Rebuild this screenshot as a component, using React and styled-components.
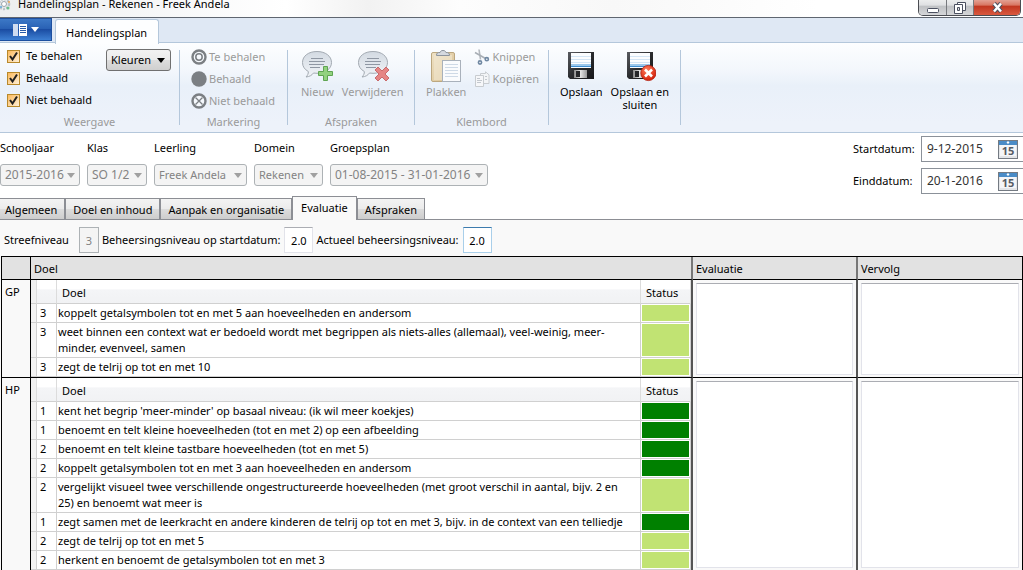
import styled, { createGlobalStyle } from 'styled-components'
import { useState } from 'react'


const arrow = (color) =>
  `url("data:image/svg+xml,%3Csvg xmlns='http://www.w3.org/2000/svg' width='8' height='5'%3E%3Cpath d='M0 0h8L4 5z' fill='%23${color}'/%3E%3C/svg%3E")`

const tick =
  `url("data:image/svg+xml,%3Csvg xmlns='http://www.w3.org/2000/svg' width='11' height='11'%3E%3Cpath d='M2 5l2.500 3.500L9 1.500' fill='none' stroke='%23202020' stroke-width='2'/%3E%3C/svg%3E")`

const GlobalStyle = createGlobalStyle`
  * {
    box-sizing: border-box;
  }
  body {
    margin: 0;
    overflow: hidden;
    background-color: #fff;
  }
  body, button, input, select, textarea {
    font-family: 'Noto Sans', 'Open Sans', sans-serif;
    font-size: 11px;
    line-height: 16px;
    color: #000;
  }
  button {
    margin: 0;
    padding: 0;
    border: 0;
    background: none;
  }
  svg {
    display: block;
    flex: none;
  }
`

const TitleBar = styled.header`
  display: flex;
  align-items: flex-end;
  justify-content: space-between;
  height: 18px;
  border-bottom: 1px solid #5f6670;
  background: linear-gradient(to right, #eceeef, #fff 28%, #f2f2f2 36%, #fdfdfd 45%, #f8f8f8 60%, #fff 80%);
`
const AppTitle = styled.div`
  display: flex;
  align-items: flex-end;
  gap: 7px;
  padding-bottom: 5px;
`
const TitleText = styled.h1`
  margin: 0;
  font-size: 11px;
  font-weight: 400;
  line-height: 16px;
`
const WindowButtons = styled.div`
  display: flex;
  margin-right: 2px;
  height: 16px;
  align-self: flex-start;
  border: 1px solid #4a4c52;
  border-top: 0;
  border-radius: 0 0 5px 5px;
  overflow: hidden;
`
const WindowButton = styled.button`
  display: flex;
  align-items: center;
  justify-content: center;
  width: ${({ $wide }) => ($wide ? '47px' : '27px')};
  background: ${({ $close }) => $close
    ? 'linear-gradient(#e3a193, #d87561 35%, #c03620 40%, #d9593f)'
    : 'linear-gradient(#eceded, #dfe0e2 35%, #bfc1c4 40%, #d5d6d8)'};

  & + & {
    border-left: 1px solid #77797d;
  }
`

const TabStrip = styled.nav`
  display: flex;
  height: 25px;
  gap: 3px;
  background-color: #dfe8f4;
  border-bottom: 1px solid #b4c7db;
`
const AppMenu = styled.button`
  display: flex;
  align-items: center;
  justify-content: center;
  gap: 4px;
  width: 52px;
  height: 23px;
  border: 1px solid #1d4f9f;
  border-left: 0;
  background: linear-gradient(#3c78c6, #2a62b5 45%, #1b4da3 50%, #3d7fd2);
`
const RibbonTab = styled.button`
  align-self: flex-start;
  height: 25px;
  margin-top: 1px;
  padding: 2px 11px 0 10px;
  border: 1px solid #b4c7db;
  border-bottom: 0;
  border-radius: 3px 3px 0 0;
  background-color: #fdfeff;
`
const Ribbon = styled.section`
  display: flex;
  height: 90px;
  padding: 7px 0;
  border-bottom: 1px solid #b4c7db;
  background: linear-gradient(#fdfeff, #f3f7fc 30%, #e9f0f9 48%, #edf2fa 90%);
`
const Group = styled.div`
  display: flex;
  flex-direction: column;
  justify-content: space-between;
  width: ${({ $width }) => $width};
  border-right: 1px solid #b4c7db;
`
const GroupBody = styled.div`
  display: flex;
  align-items: flex-start;
  justify-content: ${({ $spread }) => ($spread ? 'space-between' : 'flex-start')};
  gap: 8px;
  padding: 0 8px 0 ${({ $left }) => $left || '8px'};
`
const GroupLabel = styled.div`
  margin-bottom: -5px;
  color: #9a9a9a;
  text-align: center;
`
const Stack = styled.div`
  display: flex;
  flex-direction: column;
  gap: 6px;
  margin-top: ${({ $checks }) => ($checks ? '-2px' : '-1px')};
`
const CheckLabel = styled.label`
  display: flex;
  align-items: center;
  gap: 6px;
  height: 16px;
`
const Check = styled.input`
  appearance: none;
  width: 13px;
  height: 13px;
  margin: 0;
  border: 1px solid #b8892b;
  background: #fde0b0;

  &:checked {
    background: ${tick} center no-repeat, linear-gradient(135deg, #fbb95c, #fff0d8);
  }
`
const ColorButton = styled.button`
  height: 22px;
  width: 65px;
  margin-top: -1px;
  padding: 0 4px;
  border: 1px solid #707070;
  border-radius: 3px;
  background: ${arrow('000000')} right 5px center no-repeat, linear-gradient(#f2f2f2, #ebebeb 50%, #dddddd 50%, #cfcfcf);
  text-align: left;
`
const SmallButton = styled.button`
  display: flex;
  align-items: center;
  gap: 2px;
  height: 16px;
  color: #9a9a9a;
  white-space: nowrap;
`
const BigButton = styled.button`
  display: flex;
  flex-direction: column;
  align-items: center;
  gap: 3px;
  line-height: 13px;
  white-space: pre;

  &:disabled {
    color: #9a9a9a;
  }
`

const FormBar = styled.section`
  display: flex;
  justify-content: space-between;
  padding-top: 3px;
  height: 64px;
`
const Filters = styled.div`
  display: flex;
  gap: 7px;
  padding-top: 4px;
`
const Filter = styled.label`
  display: flex;
  flex-direction: column;
  gap: 8px;
`
const Select = styled.select`
  appearance: none;
  width: ${({ $width }) => $width};
  height: 22px;
  padding: 0 4px;
  border: 1px solid #adb2b5;
  border-radius: 3px;
  background: #f4f4f4 ${arrow('a0a0a0')} right 4px center no-repeat;
  font-size: ${({ $text }) => ($text ? '11px' : '12px')};

  &:disabled {
    color: #838383;
    opacity: 1;
  }
`
const Dates = styled.div`
  display: flex;
  flex-direction: column;
  gap: 6px;
`
const DateRow = styled.label`
  display: grid;
  grid-template-columns: 68px 102px;
  align-items: center;
`
const DateBox = styled.span`
  display: flex;
  align-items: center;
  justify-content: space-between;
  height: 26px;
  padding: 0 5px;
  border: 1px solid #8b9199;
  border-right: 0;
  background-color: #fff;
`
const DateInput = styled.input`
  width: 66px;
  padding: 0;
  border: 0;
  outline: 0;
  color: #333;
  font-size: 12px;
`

const Tabs = styled.nav`
  display: flex;
  align-items: flex-end;
  height: 23px;
  border-bottom: 1px solid #8c8e94;
`
const Tab = styled.button`
  height: ${({ $active }) => ($active ? '24px' : '21px')};
  padding: ${({ $active }) => ($active ? '0 8px 2px' : '1px 7px 0')};
  margin-bottom: ${({ $active }) => ($active ? '-1px' : '0')};
  border: 1px solid #8c8e94;
  border-bottom: 0;
  background: ${({ $active }) => ($active ? '#f9f9f9' : 'linear-gradient(#f3f3f3, #ebebeb 50%, #dddddd 50%, #cdcdcd)')};
  white-space: nowrap;

  &:first-child {
    padding-left: 5px;
    border-left: 0;
  }
`
const Panel = styled.main`
  padding: 7px 0 0 1px;
  background-color: #f9f9f9;
`
const Levels = styled.div`
  display: flex;
  align-items: center;
  gap: 3px;
  padding: 0 3px;
  margin-bottom: 3px;
`
const Level = styled.label`
  display: flex;
  align-items: center;
  gap: ${({ $gap }) => $gap || '4px'};
`
const LevelInput = styled.input`
  width: ${({ $width }) => $width || '29px'};
  height: 26px;
  padding: 0;
  border: 1px solid ${({ $focus }) => ($focus ? '#a9cfea' : '#e2e3ea')};
  border-top-color: ${({ $focus }) => ($focus ? '#3d7bad' : '#abadb3')};
  outline: 0;
  text-align: center;

  &:disabled {
    border-color: #adb2b5;
    background-color: #f4f4f4;
    color: #838383;
  }
`

const Grid = styled.table`
  width: 100%;
  table-layout: fixed;
  border-collapse: separate;
  border-spacing: 0;
  border: 1px solid #000;
`
const HeadCell = styled.th`
  height: 23px;
  padding: 1px 3px 0;
  border-bottom: 1px solid #000;
  border-right: ${({ $line }) => $line || '0'};
  background-color: #e2e2e2;
  font-weight: 400;
  text-align: left;
`
const PlanCell = styled.th`
  padding: 4px 3px;
  border-right: 1px solid #000;
  border-bottom: 1px solid #000;
  font-weight: 400;
  text-align: left;
  vertical-align: top;
`
const Cell = styled.td`
  height: 1px;
  padding: ${({ $pad }) => $pad || '0'};
  border-bottom: 1px solid #000;
  border-right: ${({ $line }) => $line || '0'};
  vertical-align: top;
`
const Notes = styled.textarea`
  display: block;
  width: 100%;
  height: 100%;
  border: 1px solid #e2e3ea;
  border-top-color: #abadb3;
  outline: 0;
  resize: none;
`
const Goals = styled.table`
  width: 100%;
  table-layout: fixed;
  border-collapse: separate;
  border-spacing: 0;
  background-color: #fff;
`
const GoalHead = styled.th`
  height: 24px;
  padding: 2px 5px 0;
  border-right: 1px solid #dcdcdc;
  border-bottom: 1px solid #d0d0d0;
  background: ${({ $bar }) => ($bar ? '#f0f0f0' : 'linear-gradient(#fff 40%, #f4f5f7 42%, #f1f2f4)')};
  font-weight: 400;
  text-align: left;
`
const GoalCell = styled.td`
  padding: ${({ $number }) => ($number ? '1px 3px' : '1px')};
  border-right: 1px solid #d0d0d0;
  border-bottom: 1px solid #d0d0d0;
  vertical-align: top;
`
const BarCell = styled(GoalCell)`
  background-color: #f3f3f3;
`
const LineText = styled.div`
  white-space: pre-line;
`
const StatusCell = styled(GoalCell)`
  background: ${({ $done }) => ($done ? '#008000' : '#c1e373')} content-box;
`

const goals = [
  {
    plan: 'GP',
    rows: [
      [3, 'koppelt getalsymbolen tot en met 5 aan hoeveelheden en andersom', false],
      [3, 'weet binnen een context wat er bedoeld wordt met begrippen als niets-alles (allemaal), veel-weinig, meer-\nminder, evenveel, samen', false],
      [3, 'zegt de telrij op tot en met 10', false],
    ],
  },
  {
    plan: 'HP',
    rows: [
      [1, "kent het begrip 'meer-minder' op basaal niveau: (ik wil meer koekjes)", true],
      [1, 'benoemt en telt kleine hoeveelheden (tot en met 2) op een afbeelding', true],
      [2, 'benoemt en telt kleine tastbare hoeveelheden (tot en met 5)', true],
      [2, 'koppelt getalsymbolen tot en met 3 aan hoeveelheden en andersom', true],
      [2, 'vergelijkt visueel twee verschillende ongestructureerde hoeveelheden (met groot verschil in aantal, bijv. 2 en\n25) en benoemt wat meer is', false],
      [1, 'zegt samen met de leerkracht en andere kinderen de telrij op tot en met 3, bijv. in de context van een telliedje', true],
      [2, 'zegt de telrij op tot en met 5', false],
      [2, 'herkent en benoemt de getalsymbolen tot en met 3', false],
    ],
  },
]

const filters = [
  ['Schooljaar', '2015-2016', '80px'],
  ['Klas', 'SO 1/2', '60px'],
  ['Leerling', 'Freek Andela', '93px', true],
  ['Domein', 'Rekenen', '69px', true],
  ['Groepsplan', '01-08-2015 - 31-01-2016', '158px'],
]

const tabs = ['Algemeen', 'Doel en inhoud', 'Aanpak en organisatie', 'Evaluatie', 'Afspraken']

function GearIcon() {
  return (
    <svg width="11" height="14" viewBox="0 0 11 14">
      <circle cx="4" cy="6" r="5" fill="none" stroke="#b9c0c6" strokeWidth="2.500" strokeDasharray="2 1.300" />
      <circle cx="4" cy="6" r="2.500" fill="#fff" stroke="#9aa3ab" />
      <circle cx="8" cy="10" r="1.500" fill="#6cc08b" />
      <circle cx="9" cy="4" r="1" fill="#e9a24b" />
      <circle cx="1" cy="9" r="1" fill="#62a8dc" />
    </svg>
  )
}

function MarkIcon({ type }) {
  return (
    <svg width="16" height="16" viewBox="0 0 16 16">
      {type === 'full' && <circle cx="8" cy="8" r="7.700" fill="#7b7f83" />}
      {type !== 'full' && <circle cx="8" cy="8" r="6.500" fill="#f5f8fc" stroke="#7b7f83" strokeWidth="2.400" />}
      {type === 'ring' && <circle cx="8" cy="8" r="3.200" fill="none" stroke="#7b7f83" strokeWidth="1.500" />}
      {type === 'cross' && <path d="M4.500 4.500l7 7M11.500 4.500l-7 7" stroke="#7b7f83" strokeWidth="1.300" />}
    </svg>
  )
}

function BubbleIcon({ remove }) {
  return (
    <svg width="32" height="32" viewBox="0 0 32 32">
      <defs>
        <linearGradient id="bubble" x1="0" y1="0" x2="0" y2="1">
          <stop offset="0" stopColor="#d3dae2" />
          <stop offset="1" stopColor="#f1f4f8" />
        </linearGradient>
      </defs>
      <path
        d="M16 1.500C7.500 1.500 1.500 6 1.500 12.500c0 4 2.200 7 5.800 9 .3 2-.8 4-2.300 5.500 3.500-.3 6-1.800 7.500-4 1.200.2 2.300.3 3.500.3 8.500 0 14.500-4.500 14.500-10.800S24.500 1.500 16 1.500z"
        fill="url(#bubble)" stroke="#a3aab2"
      />
      <path d="M10 8.500h12M8 11.500h16M8 14.500h15M9 17.500h10" stroke="#8f97a3" />
      {remove
        ? <path d="M18 20l3-3 4 4 4-4 3 3-4 4 4 4-3 3-4-4-4 4-3-3 4-4z" fill="#e58584" stroke="#c96a6c" />
        : <path d="M22.500 16.500h4v5h5v4h-5v5h-4v-5h-5v-4h5z" fill="#93d27f" stroke="#5fa452" />}
    </svg>
  )
}

function PasteIcon() {
  return (
    <svg width="32" height="32" viewBox="0 1 32 32">
      <defs>
        <linearGradient id="board" x1="0" y1="0" x2="1" y2="1">
          <stop offset="0" stopColor="#efe2c6" />
          <stop offset="1" stopColor="#d7bd8c" />
        </linearGradient>
      </defs>
      <rect x="1.500" y="3.500" width="23" height="29" rx="1.500" fill="url(#board)" stroke="#bca77f" />
      <rect x="4" y="6" width="18" height="25" fill="#f2e8d2" opacity=".6" />
      <path d="M6.500 6.500c0-2.500 1-3 3.500-3 .5-1.500 1.500-2 3-2s2.500.5 3 2c2.500 0 3.500.5 3.500 3z" fill="#d5d9df" stroke="#8d949d" />
      <rect x="12.500" y="11.500" width="18" height="21" fill="#fafbfd" stroke="#a9b1bb" />
      <path d="M15 15.500h13M15 18.500h13M15 21.500h13M15 24.500h13M15 27.500h13" stroke="#ced9e6" />
    </svg>
  )
}

function CutIcon() {
  return (
    <svg width="16" height="16" viewBox="0 0 16 16" fill="none">
      <path d="M5 .5l1.500 10" stroke="#b3b8be" strokeWidth="1.600" />
      <path d="M1 3.500l10.500 6" stroke="#a8aeb5" strokeWidth="1.600" />
      <circle cx="6" cy="13.500" r="1.600" stroke="#7189a3" strokeWidth="1.600" />
      <circle cx="12.800" cy="10.200" r="1.600" stroke="#7189a3" strokeWidth="1.600" />
    </svg>
  )
}

function CopyIcon() {
  return (
    <svg width="16" height="16" viewBox="0 0 16 16">
      <path d="M6.500 2.500h5V.8l3.500 3v8.700H6.500z" fill="#f3f5f7" stroke="#c8ccd0" />
      <path d="M1.500 4.500h8v11h-8z" fill="#f6f7f9" stroke="#c8ccd0" />
      <path d="M3 7.500h3M3 9.500h5M3 11.500h4M11 5.500h2M11 8.500h2" stroke="#c3c8ce" />
    </svg>
  )
}

function FloppyIcon({ close }) {
  return (
    <svg width="32" height="32" viewBox="0 0 32 32">
      <defs>
        <linearGradient id="disk" x1="0" y1="0" x2="1" y2="1">
          <stop offset="0" stopColor="#5a5c60" />
          <stop offset=".5" stopColor="#2a2b2e" />
          <stop offset="1" stopColor="#17181a" />
        </linearGradient>
        <linearGradient id="shutter">
          <stop offset="0" stopColor="#888" />
          <stop offset=".5" stopColor="#e4e4e4" />
          <stop offset="1" stopColor="#9a9a9a" />
        </linearGradient>
        <radialGradient id="ball" cx=".4" cy=".3" r=".7">
          <stop offset="0" stopColor="#ff7d5c" />
          <stop offset="1" stopColor="#d3210b" />
        </radialGradient>
      </defs>
      <path d="M3 2h26v27H5l-2-2z" fill="url(#disk)" />
      <path d="M6 3h20v15H6z" fill="#fbfdff" />
      <path d="M6 6.500h20M6 9.500h20M6 12.500h20" stroke="#d3e5f5" />
      <path d="M6 14h20v2H6z" fill="#9cc8ec" />
      <path d="M6 16h20v1H6z" fill="#3f8ed0" />
      <path d="M9 20h13v8H9z" fill="url(#shutter)" />
      <path d="M11 21h4v6h-4z" fill="#26272a" />
      {close && (
        <>
          <circle cx="24.400" cy="23" r="7.600" fill="url(#ball)" stroke="#b31d0c" strokeWidth=".8" />
          <path d="M21 19.500l7 7M28 19.500l-7 7" stroke="#fff" strokeWidth="2.600" />
        </>
      )}
    </svg>
  )
}

function CalendarIcon() {
  return (
    <svg width="20" height="19" viewBox="0 0 20 19">
      <rect x=".5" y=".5" width="19" height="18" fill="#e3e5e8" stroke="#747a82" />
      <rect x="1" y="1" width="18" height="4" fill="#4a8cc7" />
      <path d="M10 1l1.500 1.500L10 4 8.500 2.500z" fill="#fff" />
      <rect x="2" y="5" width="16" height="11" fill="#f5f6f8" />
      <text x="10" y="15" textAnchor="middle" fontFamily="Open Sans, sans-serif" fontSize="11" fontWeight="700" fill="#555b63">15</text>
    </svg>
  )
}

function GoalTable({ rows }) {
  return (
    <Goals>
      <colgroup>
        <col style={{ width: 6 }} />
        <col style={{ width: 20 }} />
        <col />
        <col style={{ width: 50 }} />
      </colgroup>
      <thead>
        <tr>
          <GoalHead $bar />
          <GoalHead />
          <GoalHead>Doel</GoalHead>
          <GoalHead>Status</GoalHead>
        </tr>
      </thead>
      <tbody>
        {rows.map(([level, text, done]) => (
          <tr key={text}>
            <BarCell />
            <GoalCell $number>{level}</GoalCell>
            <GoalCell><LineText>{text}</LineText></GoalCell>
            <StatusCell $done={done} aria-label={done ? 'Behaald' : 'Te behalen'} />
          </tr>
        ))}
      </tbody>
    </Goals>
  )
}

function App() {
  const [shown, setShown] = useState({ 'Te behalen': true, 'Behaald': true, 'Niet behaald': true })
  const [tab, setTab] = useState('Evaluatie')

  return (
    <>
      <GlobalStyle />
      <TitleBar>
        <AppTitle>
          <GearIcon />
          <TitleText>Handelingsplan - Rekenen - Freek Andela</TitleText>
        </AppTitle>
        <WindowButtons>
          <WindowButton aria-label="Minimaliseren">
            <svg width="12" height="12"><rect x=".5" y="6.500" width="11" height="4" rx="1" fill="#fff" stroke="#4b5060" /></svg>
          </WindowButton>
          <WindowButton aria-label="Vorig formaat">
            <svg width="12" height="12">
              <path d="M3.500 .5h8v8h-8z" fill="#fff" stroke="#4b5060" />
              <path d="M.5 2.500h8v9h-8z" fill="#fff" stroke="#4b5060" />
              <path d="M3.500 5.500h2v3h-2z" fill="#ddd" stroke="#4b5060" />
            </svg>
          </WindowButton>
          <WindowButton $close $wide aria-label="Sluiten">
            <svg width="13" height="11">
              <path d="M3 1.500l7 8M10 1.500l-7 8" stroke="#4b5060" strokeWidth="4.500" />
              <path d="M3 1.500l7 8M10 1.500l-7 8" stroke="#fff" strokeWidth="2.500" />
            </svg>
          </WindowButton>
        </WindowButtons>
      </TitleBar>

      <TabStrip>
        <AppMenu aria-label="Menu">
          <svg width="14" height="12">
            <path d="M0 0h5v12H0z" fill="#cfdcf0" />
            <path d="M6 0h8v12H6z" fill="#fff" />
            <path d="M7 2.500h6M7 4.500h6M7 6.500h6M7 8.500h6" stroke="#2a5ca8" />
          </svg>
          <svg width="8" height="5"><path d="M0 0h8L4 5z" fill="#fff" /></svg>
        </AppMenu>
        <RibbonTab>Handelingsplan</RibbonTab>
      </TabStrip>

      <Ribbon>
        <Group $width="180px">
          <GroupBody $left="7px" $spread>
            <Stack $checks>
              {Object.keys(shown).map(name => (
                <CheckLabel key={name}>
                  <Check
                    type="checkbox"
                    checked={shown[name]}
                    onChange={e => setShown({ ...shown, [name]: e.target.checked })}
                  />
                  {name}
                </CheckLabel>
              ))}
            </Stack>
            <ColorButton aria-haspopup="menu">Kleuren</ColorButton>
          </GroupBody>
          <GroupLabel>Weergave</GroupLabel>
        </Group>

        <Group $width="108px">
          <GroupBody $left="11px">
            <Stack>
              <SmallButton disabled><MarkIcon type="ring" />Te behalen</SmallButton>
              <SmallButton disabled><MarkIcon type="full" />Behaald</SmallButton>
              <SmallButton disabled><MarkIcon type="cross" />Niet behaald</SmallButton>
            </Stack>
          </GroupBody>
          <GroupLabel>Markering</GroupLabel>
        </Group>

        <Group $width="127px">
          <GroupBody $left="13px">
            <BigButton disabled><BubbleIcon />Nieuw</BigButton>
            <BigButton disabled><BubbleIcon remove />Verwijderen</BigButton>
          </GroupBody>
          <GroupLabel>Afspraken</GroupLabel>
        </Group>

        <Group $width="134px">
          <GroupBody $left="11px">
            <BigButton disabled><PasteIcon />Plakken</BigButton>
            <Stack>
              <SmallButton disabled><CutIcon />Knippen</SmallButton>
              <SmallButton disabled><CopyIcon />Kopiëren</SmallButton>
            </Stack>
          </GroupBody>
          <GroupLabel>Klembord</GroupLabel>
        </Group>

        <Group $width="132px">
          <GroupBody $left="11px">
            <BigButton><FloppyIcon />Opslaan</BigButton>
            <BigButton><FloppyIcon close />{'Opslaan en\nsluiten'}</BigButton>
          </GroupBody>
        </Group>
      </Ribbon>

      <FormBar>
        <Filters>
          {filters.map(([label, value, width, text]) => (
            <Filter key={label}>
              {label}
              <Select $width={width} $text={text} disabled>
                <option>{value}</option>
              </Select>
            </Filter>
          ))}
        </Filters>
        <Dates>
          <DateRow>
            Startdatum:
            <DateBox><DateInput defaultValue="9-12-2015" /><CalendarIcon /></DateBox>
          </DateRow>
          <DateRow>
            Einddatum:
            <DateBox><DateInput defaultValue="20-1-2016" /><CalendarIcon /></DateBox>
          </DateRow>
        </Dates>
      </FormBar>

      <Tabs>
        {tabs.map(name => (
          <Tab key={name} $active={tab === name} onClick={() => setTab(name)}>{name}</Tab>
        ))}
      </Tabs>

      <Panel>
        <Levels>
          <Level $gap="10px">Streefniveau<LevelInput $width="20px" defaultValue="3" disabled /></Level>
          <Level>Beheersingsniveau op startdatum:<LevelInput defaultValue="2.0" /></Level>
          <Level>Actueel beheersingsniveau:<LevelInput defaultValue="2.0" $focus /></Level>
        </Levels>

        <Grid>
          <colgroup>
            <col style={{ width: 29 }} />
            <col />
            <col style={{ width: 165 }} />
            <col style={{ width: 164 }} />
          </colgroup>
          <thead>
            <tr>
              <HeadCell $line="1px solid #000" />
              <HeadCell $line="2px solid #777">Doel</HeadCell>
              <HeadCell $line="2px solid #777">Evaluatie</HeadCell>
              <HeadCell>Vervolg</HeadCell>
            </tr>
          </thead>
          <tbody>
            {goals.map(({ plan, rows }) => (
              <tr key={plan}>
                <PlanCell>{plan}</PlanCell>
                <Cell $line="2px solid #555"><GoalTable rows={rows} /></Cell>
                <Cell $pad="3px 3px 2px" $line="2px solid #555"><Notes aria-label={`Evaluatie ${plan}`} /></Cell>
                <Cell $pad="3px 3px 2px"><Notes aria-label={`Vervolg ${plan}`} /></Cell>
              </tr>
            ))}
          </tbody>
        </Grid>
      </Panel>
    </>
  )
}

export default App
